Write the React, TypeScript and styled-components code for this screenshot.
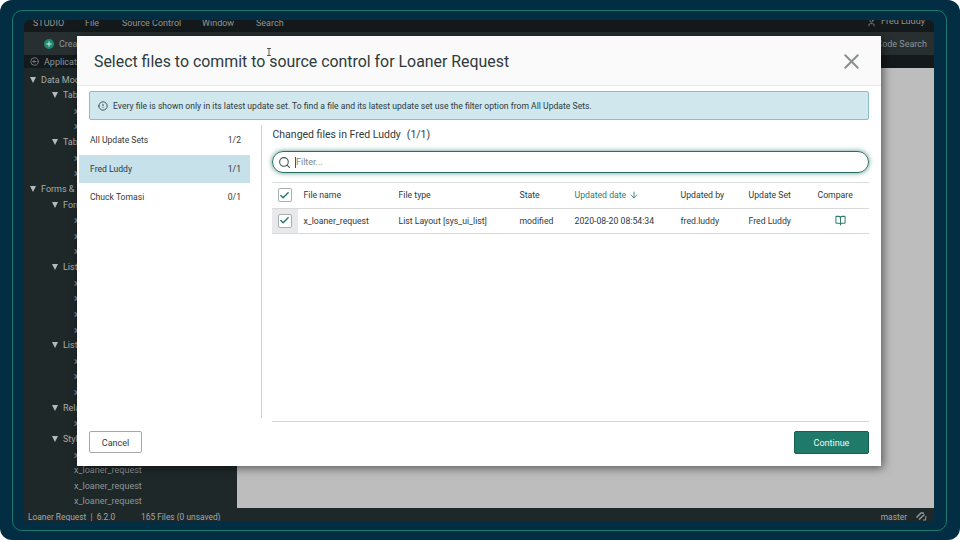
import styled, { createGlobalStyle } from "styled-components";
import { BookOpen, Check, Info, Plus, Search, User, X, ArrowDown, CircleArrowLeft } from "lucide-react";

const GlobalStyle = createGlobalStyle`
  html, body { margin: 0; padding: 0; background: #fff; }
  body { font-family: Roboto, "Liberation Sans", sans-serif; }
  * { box-sizing: border-box; }
`;

const Frame = styled.div`
  position: relative;
  width: 960px;
  height: 540px;
  overflow: hidden;
  background: #032d42;
  border-radius: 12px;
  padding: 10px 13px 9px 12px;
`;

const Outline = styled.div`
  height: 100%;
  border: 1px solid #187a6e;
  border-radius: 10px;
  padding: 9px 12px 9px 11px;
`;

const Screen = styled.div`
  height: 100%;
  display: flex;
  flex-direction: column;
  overflow: hidden;
  border-radius: 6px 6px 0 0;
  background: #1f2829;
  color: #8f9697;
  font-size: 9px;
`;

const MenuBar = styled.div`
  height: 12px;
  flex: none;
  display: flex;
  align-items: flex-start;
  background: #14191b;
  overflow: hidden;
  padding-left: 9px;
  line-height: 7px;
`;

const MenuItem = styled.span<{ $w: number }>`
  width: ${(p) => p.$w}px;
  flex: none;
`;

const MenuUser = styled.span`
  margin: -2px 0 0 auto;
  padding-right: 9px;
  display: flex;
  align-items: flex-start;
  gap: 5px;
`;

const Toolbar = styled.div`
  height: 23px;
  flex: none;
  display: flex;
  align-items: center;
  justify-content: space-between;
  background: #282f30;
  padding: 0 7px 0 20px;
`;

const CreateButton = styled.span`
  display: flex;
  align-items: center;
  gap: 5px;
`;

const PlusBadge = styled.span`
  width: 10px;
  height: 10px;
  border-radius: 50%;
  background: #1b8a6e;
  color: #d8e8e2;
  display: flex;
  align-items: center;
  justify-content: center;
`;

const Columns = styled.div`
  flex: 1;
  display: flex;
  min-height: 0;
`;

const Sidebar = styled.div`
  width: 213px;
  flex: none;
  display: flex;
  flex-direction: column;
`;

const AppRow = styled.div`
  height: 13px;
  flex: none;
  display: flex;
  align-items: center;
  gap: 5px;
  background: #14191b;
  padding-left: 6px;
`;

const Tree = styled.div`
  flex: 1;
  overflow: hidden;
  padding-top: 3.8px;
`;

const TreeRow = styled.div<{ $level: number }>`
  height: 15.63px;
  display: flex;
  align-items: center;
  gap: 5px;
  padding-left: ${(p) => [6, 28, 50][p.$level]}px;
  color: ${(p) => (p.$level < 2 ? "#a7acad" : "#8f9697")};
`;

const Triangle = styled.span`
  width: 0;
  height: 0;
  border-left: 3.5px solid transparent;
  border-right: 3.5px solid transparent;
  border-top: 6px solid #b4babb;
`;

const Stage = styled.div`
  flex: 1;
  display: flex;
  flex-direction: column;
`;

const StageHead = styled.div`
  height: 13px;
  background: #14191b;
`;

const StageBody = styled.div`
  flex: 1;
  background: #bdbdbd;
`;

const StatusBar = styled.div`
  height: 13px;
  flex: none;
  display: flex;
  align-items: flex-start;
  background: #1f2829;
  padding: 4px 7px 0 4px;
  font-size: 8.4px;
  line-height: 10px;
  color: #a1a7a8;
`;

const StatusApp = styled.span`
  width: 113px;
`;

const StatusBranch = styled.span`
  margin-left: auto;
  display: flex;
  gap: 8px;
`;

const BranchIcon = styled.svg`
  margin-top: -1px;
`;

const Modal = styled.div`
  position: absolute;
  left: 77px;
  top: 36px;
  width: 804px;
  height: 429.5px;
  display: flex;
  flex-direction: column;
  background: #fff;
  color: #2e3a3d;
  box-shadow: 2px 2px 9px rgba(0, 0, 0, 0.55);
`;

const ModalHeader = styled.div`
  height: 50px;
  flex: none;
  display: flex;
  align-items: center;
  justify-content: space-between;
  background: #fafafa;
  border-bottom: 1px solid #e8e8e8;
  padding: 1px 17.5px 0 17px;
`;

const Title = styled.h1`
  margin: 0;
  font-size: 15.9px;
  font-weight: 400;
  color: #2f3a3d;
`;

const CloseIcon = styled(X)`
  color: #8a8e90;
`;

const Alert = styled.div`
  height: 29px;
  flex: none;
  margin: 5px 12px 0;
  display: flex;
  align-items: center;
  gap: 5px;
  padding-left: 8px;
  background: #cfe7ed;
  border: 1px solid #8dbcc9;
  border-bottom-width: 1.5px;
  border-radius: 2px;
  font-size: 8.62px;
  color: #2e3a3d;
`;

const Body = styled.div`
  height: 293px;
  flex: none;
  margin-top: 5px;
  display: flex;
`;

const SetList = styled.div`
  width: 171px;
  flex: none;
  margin-left: 2px;
  padding-top: 1px;
`;

const SetRow = styled.div<{ $active?: boolean }>`
  height: 28.5px;
  display: flex;
  align-items: center;
  justify-content: space-between;
  padding: 0 9px 0 11px;
  font-size: 8.6px;
  background: ${(p) => (p.$active ? "#c6e1ea" : "transparent")};
`;

const Files = styled.div`
  flex: 1;
  margin: 0 12px 0 11px;
  padding-left: 9.5px;
  border-left: 1.5px solid #cfcfcf;
`;

const FilesTitle = styled.div`
  height: 18px;
  display: flex;
  align-items: center;
  gap: 6px;
  padding-left: 1px;
  font-size: 10.5px;
  color: #2f3a3d;
`;

const FilterBox = styled.div`
  height: 22px;
  margin-top: 8px;
  display: flex;
  align-items: center;
  padding-left: 5.5px;
  gap: 3.5px;
  border: 1.5px solid #256f63;
  border-radius: 11px;
  box-shadow: 0 0 5px rgba(46, 124, 112, 0.8);
  font-size: 9px;
  color: #7d8587;
`;

const FilterIcon = styled(Search)`
  color: #4a5254;
`;

const Caret = styled.span`
  width: 1px;
  height: 11px;
  margin-right: -3px;
  background: #4a5254;
`;

const FileTable = styled.div`
  margin-top: 9px;
  border-top: 1px solid #dcdcdc;
  font-size: 8.7px;
`;

const TableRow = styled.div`
  display: grid;
  grid-template-columns: 26px 95px 121px 55px 106px 68px 69px 57px;
  height: 25.5px;
  align-items: center;
  border-bottom: 1px solid #d8d8d8;
`;

const CheckCell = styled.div<{ $shaded?: boolean }>`
  height: 100%;
  display: flex;
  align-items: center;
  justify-content: center;
  background: ${(p) => (p.$shaded ? "#e8e9eb" : "transparent")};
`;

const CheckBox = styled.span`
  width: 14px;
  height: 14px;
  display: flex;
  align-items: center;
  justify-content: center;
  background: #fff;
  border: 1px solid #a9adaf;
  border-radius: 2px;
  color: #1f7a6a;
`;

const Cell = styled.div<{ $sorted?: boolean; $center?: boolean }>`
  display: flex;
  align-items: center;
  gap: 3px;
  padding-left: ${(p) => (p.$center ? "0" : "6px")};
  justify-content: ${(p) => (p.$center ? "center" : "flex-start")};
  white-space: nowrap;
  color: ${(p) => (p.$sorted ? "#2e7c70" : "inherit")};
`;

const FooterRule = styled.div`
  height: 1px;
  flex: none;
  margin: 3px 12px 0 195px;
  background: #d4d4d4;
`;

const Footer = styled.div`
  flex: 1;
  display: flex;
  justify-content: space-between;
  align-items: flex-start;
  padding: 9px 12px 0;
`;

const CancelButton = styled.button`
  width: 53px;
  height: 22px;
  padding: 1px 0 0;
  background: #fff;
  border: 1px solid #a3a7a9;
  border-radius: 2px;
  font: inherit;
  font-size: 9px;
  color: #2e3a3d;
`;

const ContinueButton = styled.button`
  width: 75px;
  height: 22.5px;
  padding: 1px 0 0;
  background: #1f7a6a;
  border: 1px solid #17604f;
  border-radius: 2px;
  font: inherit;
  font-size: 9px;
  color: #f2f7f6;
`;

const TextCursor = styled.svg`
  position: absolute;
  left: 266px;
  top: 48px;
`;

const tree: [number, string][] = [
  [0, "Data Model"],
  [1, "Tables"],
  [2, "x_loaner_request"],
  [2, "x_loaner_request"],
  [1, "Tables"],
  [2, "x_loaner_request"],
  [2, "x_loaner_request"],
  [0, "Forms & UI"],
  [1, "Forms"],
  [2, "x_loaner_request"],
  [2, "x_loaner_request"],
  [2, "x_loaner_request"],
  [1, "Lists"],
  [2, "x_loaner_request"],
  [2, "x_loaner_request"],
  [2, "x_loaner_request"],
  [2, "x_loaner_request"],
  [1, "Lists"],
  [2, "x_loaner_request"],
  [2, "x_loaner_request"],
  [2, "x_loaner_request"],
  [1, "Related"],
  [2, "x_loaner_request"],
  [1, "Styles"],
  [2, "x_loaner_request"],
  [2, "x_loaner_request"],
  [2, "x_loaner_request"],
  [2, "x_loaner_request"],
];

const menu: [string, number][] = [
  ["STUDIO", 52],
  ["File", 37],
  ["Source Control", 80],
  ["Window", 54],
  ["Search", 50],
];

const columns = ["File name", "File type", "State"];

export default function App() {
  return (
    <>
      <GlobalStyle />
      <Frame>
        <Outline>
          <Screen>
            <MenuBar>
              {menu.map(([name, w]) => (
                <MenuItem key={name} $w={w}>
                  {name}
                </MenuItem>
              ))}
              <MenuUser>
                <User size={9} />
                Fred Luddy
              </MenuUser>
            </MenuBar>
            <Toolbar>
              <CreateButton>
                <PlusBadge>
                  <Plus size={8} strokeWidth={3} />
                </PlusBadge>
                Create
              </CreateButton>
              <span>Code Search</span>
            </Toolbar>
            <Columns>
              <Sidebar>
                <AppRow>
                  <CircleArrowLeft size={9} />
                  Application
                </AppRow>
                <Tree>
                  {tree.map(([level, label], i) => (
                    <TreeRow key={i} $level={level}>
                      {level < 2 && <Triangle />}
                      {label}
                    </TreeRow>
                  ))}
                </Tree>
              </Sidebar>
              <Stage>
                <StageHead />
                <StageBody />
              </Stage>
            </Columns>
            <StatusBar>
              <StatusApp>Loaner Request&nbsp; |&nbsp; 6.2.0</StatusApp>
              <span>165 Files (0 unsaved)</span>
              <StatusBranch>
                master
                <BranchIcon width="12" height="10" viewBox="0 0 12 10" fill="none" stroke="#8f9697" strokeWidth="1.6">
                  <path d="M1.5 6.5 6 2h3" />
                  <path d="M4 8.5 9.5 3.5" />
                  <path d="M8 9h2.5l.5-4" strokeWidth="1.1" />
                </BranchIcon>
              </StatusBranch>
            </StatusBar>
          </Screen>
        </Outline>

        <Modal>
          <ModalHeader>
            <Title>Select files to commit to source control for Loaner Request</Title>
            <CloseIcon size={25} strokeWidth={1.9} />
          </ModalHeader>
          <Alert>
            <Info size={10} style={{ transform: "rotate(180deg)" }} />
            <span>
              Every file is shown only in its latest update set. To find a file and its latest update set use the filter option from All Update Sets.
            </span>
          </Alert>
          <Body>
            <SetList>
              <SetRow>
                <span>All Update Sets</span>
                <span>1/2</span>
              </SetRow>
              <SetRow $active>
                <span>Fred Luddy</span>
                <span>1/1</span>
              </SetRow>
              <SetRow>
                <span>Chuck Tomasi</span>
                <span>0/1</span>
              </SetRow>
            </SetList>
            <Files>
              <FilesTitle>
                <span>Changed files in Fred Luddy</span>
                <span>(1/1)</span>
              </FilesTitle>
              <FilterBox>
                <FilterIcon size={13} />
                <Caret />
                Filter...
              </FilterBox>
              <FileTable>
                <TableRow>
                  <CheckCell>
                    <CheckBox>
                      <Check size={11} strokeWidth={3} />
                    </CheckBox>
                  </CheckCell>
                  {columns.map((c) => (
                    <Cell key={c}>{c}</Cell>
                  ))}
                  <Cell $sorted>
                    Updated date
                    <ArrowDown size={10} />
                  </Cell>
                  <Cell>Updated by</Cell>
                  <Cell>Update Set</Cell>
                  <Cell>Compare</Cell>
                </TableRow>
                <TableRow>
                  <CheckCell $shaded>
                    <CheckBox>
                      <Check size={11} strokeWidth={3} />
                    </CheckBox>
                  </CheckCell>
                  <Cell>x_loaner_request</Cell>
                  <Cell>List Layout [sys_ui_list]</Cell>
                  <Cell>modified</Cell>
                  <Cell>2020-08-20 08:54:34</Cell>
                  <Cell>fred.luddy</Cell>
                  <Cell>Fred Luddy</Cell>
                  <Cell $center $sorted>
                    <BookOpen size={11} strokeWidth={2.2} />
                  </Cell>
                </TableRow>
              </FileTable>
            </Files>
          </Body>
          <FooterRule />
          <Footer>
            <CancelButton>Cancel</CancelButton>
            <ContinueButton>Continue</ContinueButton>
          </Footer>
        </Modal>
        <TextCursor width="6" height="8" viewBox="0 0 6 8" fill="none" stroke="#333" strokeWidth="0.8">
          <path d="M1 .5h4M3 .5v7M1 7.5h4" />
        </TextCursor>
      </Frame>
    </>
  );
}
